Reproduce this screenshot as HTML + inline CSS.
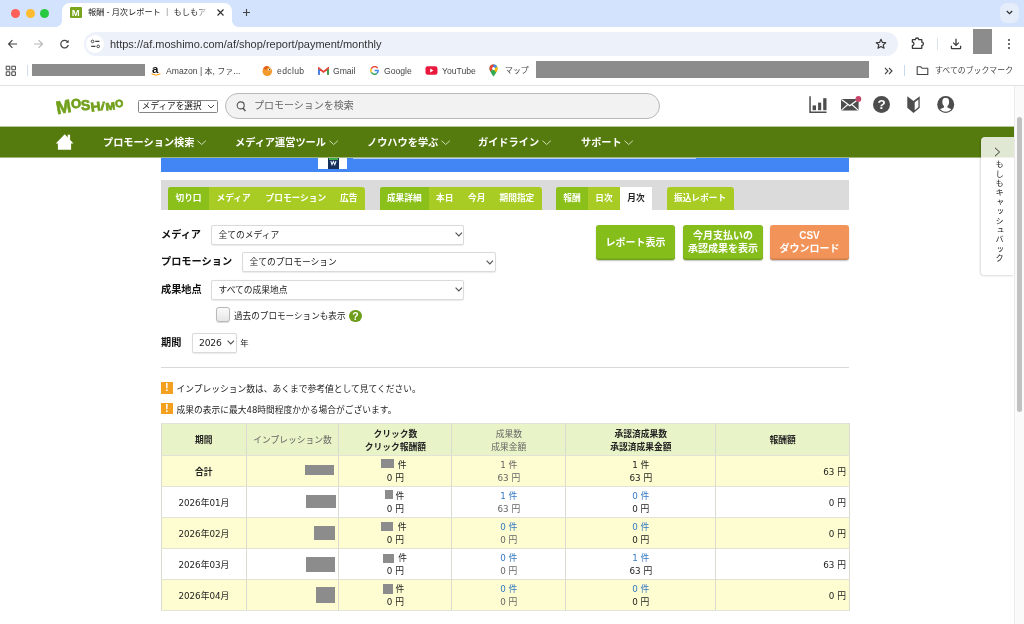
<!DOCTYPE html>
<html lang="ja"><head><meta charset="utf-8"><title>報酬 - 月次レポート</title>
<style>
*{box-sizing:border-box;margin:0;padding:0}
html,body{width:1024px;height:624px;overflow:hidden;background:#fff}
body{position:relative;will-change:transform;font-family:"Liberation Sans","Noto Sans CJK JP",sans-serif;color:#222;font-size:10px}
.a{position:absolute;white-space:nowrap}
.g{background:#8c8c8c}
/* chrome */
#tabbar{left:0;top:0;width:1024px;height:27px;background:#d3e3fd}
#tab{left:62px;top:3px;width:170px;height:24px;background:#fff;border-radius:8px 8px 0 0}
#toolbar{left:0;top:27px;width:1024px;height:31px;background:#fff}
#url{left:84px;top:31.500px;width:814px;height:24px;border-radius:12px;background:#edf1fa}
#bm{left:0;top:58px;width:1024px;height:28px;background:#fff;border-bottom:1px solid #dfe1e5}
.bmt{font-size:8.6px;color:#444;top:65px;line-height:12px}
/* page */
#nav{left:0;top:126px;width:1014px;height:32px;background:linear-gradient(to bottom,rgba(85,123,14,.42) 0,rgba(85,123,14,.42) 1px,#557b0e 1px,#557b0e 31px,rgba(85,123,14,.55) 31px)}
.lg{font-weight:bold;color:#72a01c;line-height:1;transform-origin:50% 50%;-webkit-text-stroke:0.700px #72a01c}
.cv{top:140px;width:10px;height:6px}
.nv{color:#fff;font-weight:bold;font-size:10.200px;top:135.500px;line-height:14px}
.tabs{top:187px;height:23px;line-height:22.500px;color:#fff;font-weight:bold;font-size:8.700px;text-align:center}
.lbl{font-weight:bold;font-size:10.200px;color:#111;line-height:14px}
.sel{border:1px solid #dadada;border-radius:2px;background:#fff;height:20px;font-size:8.750px;line-height:18px;padding-left:6.500px;color:#222;box-shadow:0 0.500px 1px rgba(0,0,0,.08)}
.sc{width:8px;height:5px}
.btn{top:224.500px;height:35.500px;border-radius:3px;color:#fff;font-weight:bold;font-size:10px;text-align:center;line-height:13px;box-shadow:inset 0 -1.500px 0 rgba(0,0,0,.14),0 1px 1.500px rgba(0,0,0,.25)}
.note{font-size:8.750px;color:#222;line-height:12px}
.ex{width:11.500px;height:11.500px;background:#f2a01e;color:#fff;font-size:11px;font-weight:bold;text-align:center;line-height:11.500px}
table{border-collapse:collapse;position:absolute;left:161px;top:423px;width:688px;font-size:8.750px;table-layout:fixed;font-family:"DejaVu Sans","Noto Sans CJK JP",sans-serif}
td,th{border:1px solid #e2e2d6;border-left-color:#dadad0;border-right-color:#dadad0;text-align:center;line-height:13px;padding:0;height:31px;font-weight:normal;color:#222}
th{background:#e8f3c7;padding-top:2px;font-weight:bold;height:32px;font-family:"Liberation Sans","Noto Sans CJK JP",sans-serif}
tr.y td{background:#fdfdd1}
.bl{color:#3579c4}
.r{text-align:right;padding-right:3px}
.gb{display:inline-block;height:1px}
.gy{color:#666}
td{padding-top:2px}
td b{font-family:"Liberation Sans","Noto Sans CJK JP",sans-serif}
</style></head><body>
<!-- browser chrome -->
<div class="a" id="tabbar"></div>
<div class="a" style="left:11px;top:8.500px;width:9px;height:9px;border-radius:50%;background:#fe5f57"></div>
<div class="a" style="left:26px;top:8.500px;width:9px;height:9px;border-radius:50%;background:#febc2e"></div>
<div class="a" style="left:40px;top:8.500px;width:9px;height:9px;border-radius:50%;background:#28c840"></div>
<div class="a" id="tab"></div>
<div class="a" style="left:56px;top:21px;width:6px;height:6px;background:radial-gradient(circle at 0 0,#d3e3fd 5.5px,#fff 6px)"></div>
<div class="a" style="left:232px;top:21px;width:6px;height:6px;background:radial-gradient(circle at 100% 0,#d3e3fd 5.5px,#fff 6px)"></div>
<div class="a" style="left:70px;top:6.700px;width:11.500px;height:11.500px;background:#7aa51d;color:#fff;font-size:9.500px;font-weight:bold;text-align:center;line-height:11.500px;border-radius:1px">M</div>
<div class="a" style="left:88px;top:6px;font-size:8.2px;line-height:13px;color:#222">報酬 - 月次レポート ｜ もしもア</div>
<div class="a" style="left:196px;top:4px;width:12px;height:18px;background:linear-gradient(90deg,rgba(255,255,255,0),#fff)"></div>
<svg class="a" style="left:216px;top:8px" width="9" height="9" viewBox="0 0 9 9"><path d="M1.5 1.5l6 6M7.5 1.5l-6 6" stroke="#333" stroke-width="1.2" fill="none"/></svg>
<svg class="a" style="left:242px;top:8px" width="9" height="9" viewBox="0 0 9 9"><path d="M4.5 1v7M1 4.5h7" stroke="#444" stroke-width="1.1" fill="none"/></svg>
<div class="a" style="left:1000px;top:3px;width:19px;height:20px;border-radius:7px;background:#e5edfb"></div>
<svg class="a" style="left:1005px;top:9px" width="9" height="7" viewBox="0 0 9 7"><path d="M1.8 2l2.7 2.7L7.2 2" stroke="#333" stroke-width="1.3" fill="none"/></svg>
<div class="a" id="toolbar"></div>
<svg class="a" style="left:7px;top:39px" width="11" height="10" viewBox="0 0 11 10"><path d="M10 5H1.7M5.4 1.2L1.6 5l3.8 3.8" stroke="#444" stroke-width="1.2" fill="none"/></svg>
<svg class="a" style="left:33px;top:39px" width="11" height="10" viewBox="0 0 11 10"><path d="M1 5h8.3M5.6 1.2L9.4 5 5.6 8.8" stroke="#b8b8b8" stroke-width="1.2" fill="none"/></svg>
<svg class="a" style="left:59px;top:39px" width="11" height="10" viewBox="0 0 11 10"><path d="M8.9 3.2A3.8 3.8 0 1 0 9.3 6" stroke="#444" stroke-width="1.2" fill="none"/><path d="M9.6 0.8v3h-3z" fill="#444"/></svg>
<div class="a" id="url"></div>
<div class="a" style="left:86px;top:35px;width:18px;height:18px;border-radius:50%;background:#fff"></div>
<svg class="a" style="left:90px;top:39px" width="11" height="10" viewBox="0 0 11 10"><circle cx="2.6" cy="2.4" r="1.3" stroke="#444" stroke-width="1" fill="none"/><path d="M5.2 2.4h4.3M1.2 7.4h4.3" stroke="#444" stroke-width="1.1"/><circle cx="8.2" cy="7.4" r="1.3" stroke="#444" stroke-width="1" fill="none"/></svg>
<div class="a" style="left:110px;top:37px;font-size:11px;line-height:14px;color:#333">https://af.moshimo.com/af/shop/report/payment/monthly</div>
<svg class="a" style="left:875px;top:38px" width="12" height="12" viewBox="0 0 12 12"><path d="M6 1.3l1.4 3.1 3.3.3-2.5 2.2.8 3.3L6 8.5 3 10.2l.8-3.3L1.3 4.7l3.3-.3z" stroke="#3c3c3c" stroke-width="1.200" fill="none" stroke-linejoin="round"/></svg>
<svg class="a" style="left:911.300px;top:37.200px" width="14" height="13" viewBox="0 0 14 13"><path d="M1.400 2.700H4.400A1.700 1.700 0 0 1 7.800 2.700H10.800V5.200A1.600 1.600 0 0 1 10.800 8.400V11.300H1.400V8.400A1.600 1.600 0 0 0 1.400 5.200Z" stroke="#3c3c3c" stroke-width="1.300" fill="none" stroke-linejoin="round"/></svg>
<div class="a" style="left:937px;top:38px;width:1px;height:12px;background:#d9e0ee"></div>
<svg class="a" style="left:950px;top:38px" width="12" height="12" viewBox="0 0 12 12"><path d="M6 0.800v6.400M3.200 4.600L6 7.400l2.800-2.800M1.400 7.800v2.200q0 .600.600.600h8q.600 0 .600-.600V7.800" stroke="#3c3c3c" stroke-width="1.300" fill="none"/></svg>
<div class="a g" style="left:973px;top:29px;width:19px;height:25px"></div>
<div class="a" style="left:1007.900px;top:38.700px;width:2.200px;height:2.200px;border-radius:50%;background:#3c3c3c;box-shadow:0 4px 0 #3c3c3c,0 8.100px 0 #3c3c3c"></div>
<div class="a" id="bm"></div>
<svg class="a" style="left:5px;top:65px" width="12" height="12" viewBox="0 0 12 12"><path d="M1.2 1.2h3.6v3.6H1.2zM6.8 1.2h3.6v3.6H6.8zM1.2 6.8h3.6v3.6H1.2zM6.8 6.8h3.6v3.6H6.8z" stroke="#444" stroke-width="1" fill="none"/></svg>
<div class="a" style="left:27px;top:65px;width:1px;height:11px;background:#d0dcf0"></div>
<div class="a g" style="left:32px;top:64px;width:113px;height:12px"></div>
<div class="a" style="left:152px;top:63px;font-size:11.500px;font-weight:bold;line-height:13px;color:#111">a</div>
<svg class="a" style="left:151px;top:73px" width="10" height="4" viewBox="0 0 10 4"><path d="M0.5 0.8Q5 3.6 9.5 0.8" stroke="#f90" stroke-width="1" fill="none"/></svg>
<div class="a bmt" style="left:166px">Amazon | <span style="font-size:8px">本</span>, <span style="font-size:8px">ファ</span>...</div>
<svg class="a" style="left:261px;top:64px" width="13" height="13" viewBox="0 0 13 13"><circle cx="6.3" cy="7.3" r="4.8" fill="#f39a2c"/><path d="M2 4.5Q5 0.5 8.5 3.2Q6 3.5 5 6z" fill="#e2601d"/><circle cx="8.3" cy="5.6" r="1.2" fill="#fff"/><circle cx="8.5" cy="5.7" r="0.6" fill="#222"/></svg>
<div class="a bmt" style="left:277px;letter-spacing:0.350px">edclub</div>
<svg class="a" style="left:317.500px;top:66.500px" width="11" height="8" viewBox="0 0 11 8"><path d="M1 7.800V1.400L5.500 4.900 10 1.400V7.800" stroke="#ea4335" stroke-width="1.900" fill="none"/><path d="M1 7.800V2.600" stroke="#4285f4" stroke-width="1.900"/><path d="M10 7.800V2.600" stroke="#34a853" stroke-width="1.900"/></svg>
<div class="a bmt" style="left:333px">Gmail</div>
<svg class="a" style="left:370px;top:66px" width="9" height="9" viewBox="0 0 11 11"><path d="M9.3 2.6A4.4 4.4 0 0 0 1.6 3.4" stroke="#ea4335" stroke-width="1.8" fill="none"/><path d="M1.6 3.4A4.4 4.4 0 0 0 1.6 7.6" stroke="#fbbc05" stroke-width="1.8" fill="none"/><path d="M1.6 7.6A4.4 4.4 0 0 0 8.6 8.8" stroke="#34a853" stroke-width="1.8" fill="none"/><path d="M8.6 8.8A4.4 4.4 0 0 0 9.9 5.5H5.6" stroke="#4285f4" stroke-width="1.8" fill="none"/></svg>
<div class="a bmt" style="left:384px">Google</div>
<svg class="a" style="left:425px;top:66px" width="13" height="9" viewBox="0 0 13 9"><rect x="0.5" y="0.3" width="12" height="8.4" rx="2.2" fill="#e8193c"/><path d="M5.2 2.6l3.2 1.9-3.2 1.9z" fill="#fff"/></svg>
<div class="a bmt" style="left:442px">YouTube</div>
<svg class="a" style="left:489px;top:64px" width="9" height="13" viewBox="0 0 9 13"><path d="M4.5 0.5a4 4 0 0 1 4 4c0 3-4 8-4 8s-4-5-4-8a4 4 0 0 1 4-4z" fill="#34a853"/><path d="M4.5 0.5a4 4 0 0 0-4 4c0 1 .4 2 1 3.200L6 1z" fill="#ea4335"/><path d="M4.500 0.500a4 4 0 0 1 3.500 2L4.500 6z" fill="#4285f4"/><path d="M8 2.500c.3.600.5 1.300.5 2 0 1.200-.6 2.600-1.400 4L4.500 5.500z" fill="#fbbc05"/><circle cx="4.500" cy="4.500" r="1.500" fill="#fff"/></svg>
<div class="a bmt" style="left:505px;font-size:7.900px">マップ</div>
<div class="a g" style="left:536px;top:61px;width:333px;height:17px"></div>
<svg class="a" style="left:884px;top:67px" width="9" height="8" viewBox="0 0 9 8"><path d="M1 1l3 3-3 3M5 1l3 3-3 3" stroke="#444" stroke-width="1.1" fill="none"/></svg>
<div class="a" style="left:904px;top:65px;width:1px;height:11px;background:#c9d8ee"></div>
<svg class="a" style="left:916px;top:65px" width="13" height="11" viewBox="0 0 13 11"><path d="M1.200 1.800h3.600l1.200 1.400h5.800v6.300H1.200z" stroke="#444" stroke-width="1.100" fill="none" stroke-linejoin="round"/></svg>
<div class="a bmt" style="left:935px;font-size:7.9px">すべてのブックマーク</div>
<!-- page header -->
<div class="a lg" style="left:55.500px;top:98px;font-size:18px;transform:rotate(-10deg)">M</div>
<div class="a lg" style="left:71.300px;top:96.800px;font-size:13px;transform:rotate(-6deg)">O</div>
<div class="a lg" style="left:80.800px;top:97.800px;font-size:14px;transform:rotate(-4deg)">S</div>
<div class="a lg" style="left:91px;top:101.300px;font-size:12.800px;transform:rotate(-8deg) scaleX(1.080)">H</div>
<div class="a lg" style="left:100.800px;top:100.600px;font-size:11px;transform:skewX(-16deg);-webkit-text-stroke:0.900px #72a01c">i</div>
<div class="a lg" style="left:106.300px;top:100.600px;font-size:10.500px;transform:rotate(-7deg) scaleX(1.100)">M</div>
<div class="a lg" style="left:115.200px;top:97.800px;font-size:10.500px;transform:rotate(-6deg)">O</div>
<div class="a" style="left:138px;top:100px;width:80px;height:13px;border:1px solid #858585;border-radius:1.500px;font-size:8.650px;line-height:11px;padding-left:2.800px;color:#111">メディアを選択</div>
<svg class="a" style="left:207px;top:104px" width="8" height="5" viewBox="0 0 8 5"><path d="M1 1l3 3 3-3" stroke="#333" stroke-width="0.9" fill="none"/></svg>
<div class="a" style="left:225px;top:93px;width:435px;height:26px;border-radius:13px;border:1px solid #b9b9b9;background:#f2f2f2"></div>
<svg class="a" style="left:236px;top:101px" width="11" height="11" viewBox="0 0 11 11"><circle cx="4.700" cy="4.400" r="3.500" stroke="#505050" stroke-width="1.100" fill="none"/><path d="M7 7l2.400 3.200" stroke="#505050" stroke-width="1.400"/></svg>
<div class="a" style="left:254px;top:99px;font-size:10px;line-height:14px;color:#666">プロモーションを検索</div>
<svg class="a" style="left:809px;top:96px" width="19" height="18" viewBox="0 0 19 18"><path d="M1.050 0.200v16.100h16.500" stroke="#4d4d4d" stroke-width="1.500" fill="none"/><rect x="3.600" y="9.400" width="3.400" height="4.800" fill="#4d4d4d"/><rect x="9.100" y="6.600" width="3.100" height="7.600" fill="#4d4d4d"/><rect x="14.200" y="2.200" width="3.300" height="12" fill="#4d4d4d"/></svg>
<svg class="a" style="left:841px;top:95px" width="21" height="17" viewBox="0 0 21 17"><rect x="0" y="3.900" width="17.600" height="11.600" rx="1.200" fill="#4d4d4d"/><path d="M0.500 4.600l8.300 6.200 8.300-6.200" stroke="#fff" stroke-width="1.200" fill="none"/><path d="M0.500 15.100l6.300-5.600M17.100 15.100l-6.300-5.600" stroke="#fff" stroke-width="1.100" fill="none"/><circle cx="17.400" cy="3.900" r="2.900" fill="#c6466a"/></svg>
<div class="a" style="left:873.200px;top:96.200px;width:17px;height:17px;border-radius:50%;background:#4d4d4d;color:#fff;font-size:13.500px;font-weight:bold;text-align:center;line-height:17.500px">?</div>
<svg class="a" style="left:907px;top:96px" width="13" height="17" viewBox="0 0 13 17"><path d="M0.300 0.300L6.500 5 12.700 0.300V11.800L6.500 16.900 0.300 11.800z" fill="#4d4d4d"/><path d="M7.700 6.300l3.700-2.900v7.700l-3.700 3.100z" fill="#fff"/></svg>
<svg class="a" style="left:937px;top:96px" width="18" height="18" viewBox="0 0 18 18"><defs><clipPath id="uc"><circle cx="8.700" cy="8.600" r="7.200"/></clipPath></defs><circle cx="8.700" cy="8.600" r="8.500" fill="#4d4d4d"/><g clip-path="url(#uc)" fill="#fff"><ellipse cx="8.700" cy="6" rx="3.400" ry="4.200"/><path d="M7 9h3.400v2.200c0 .8 4.200 1.200 5 3.300v3.500H2v-3.500c.8-2.100 5-2.500 5-3.300z"/></g></svg>
<div class="a" id="nav"></div>
<svg class="a" style="left:56px;top:134px" width="18" height="17" viewBox="0 0 18 17"><path d="M8.700 0.300L17.500 9.400H15.100V15.800H1.900V9.400H-0.100z" fill="#fff"/><rect x="11.700" y="0.700" width="2.400" height="5" fill="#fff"/></svg>
<div class="a nv" style="left:103px">プロモーション検索</div>
<svg class="a cv" style="left:197px"><use href="#cv"/></svg>
<div class="a nv" style="left:235px">メディア運営ツール</div>
<svg class="a cv" style="left:329px"><use href="#cv"/></svg>
<div class="a nv" style="left:367px">ノウハウを学ぶ</div>
<svg class="a cv" style="left:441px"><use href="#cv"/></svg>
<div class="a nv" style="left:478px">ガイドライン</div>
<svg class="a cv" style="left:542px"><use href="#cv"/></svg>
<div class="a nv" style="left:581px">サポート</div>
<svg class="a cv" style="left:624px"><use href="#cv"/></svg>
<svg width="0" height="0" style="position:absolute"><defs><path id="cv" d="M0.500 0.700l4.200 3.800 4.200-3.800" stroke="#dfe8c8" stroke-width="0.900" fill="none"/></defs></svg>
<!-- blue banner -->
<div class="a" style="left:161px;top:158px;width:688px;height:14px;background:#4285f4"></div>
<div class="a" style="left:353px;top:158px;width:343px;height:1px;background:rgba(255,255,255,.6)"></div>
<div class="a" style="left:318px;top:158.300px;width:29.400px;height:10.300px;background:#fff"></div>
<div class="a" style="left:327.800px;top:158px;width:10.800px;height:10.600px;background:#17305a"></div>
<div class="a" style="left:328.500px;top:158px;width:9.400px;height:2px;background:#3fae49"></div>
<svg class="a" style="left:329px;top:160px" width="9" height="6" viewBox="0 0 9 6"><path d="M1.800 1l1.200 3.600 1.400-3 1.400 3 1.200-3.600" stroke="#e8f2ff" stroke-width="1.100" fill="none"/></svg>
<!-- tab strip -->
<div class="a" style="left:161px;top:180px;width:688px;height:30px;background:#dbdbdb"></div>
<div class="a tabs" style="left:168px;width:197px;background:#a9cc24;border-radius:3px 3px 0 0"></div>
<div class="a tabs" style="left:168px;width:41px;background:#8bc01a;border-radius:3px 0 0 0">切り口</div>
<div class="a tabs" style="left:216.500px">メディア</div>
<div class="a tabs" style="left:265.500px">プロモーション</div>
<div class="a tabs" style="left:340px">広告</div>
<div class="a tabs" style="left:379.500px;width:162.500px;background:#a9cc24;border-radius:3px 3px 0 0"></div>
<div class="a tabs" style="left:379.500px;width:49.500px;background:#8bc01a;border-radius:3px 0 0 0">成果詳細</div>
<div class="a tabs" style="left:436px">本日</div>
<div class="a tabs" style="left:468px">今月</div>
<div class="a tabs" style="left:499.500px">期間指定</div>
<div class="a tabs" style="left:556px;width:96px;background:#a9cc24;border-radius:3px 3px 0 0"></div>
<div class="a tabs" style="left:556px;width:32px;background:#8bc01a;border-radius:3px 0 0 0">報酬</div>
<div class="a tabs" style="left:588px;width:32px">日次</div>
<div class="a tabs" style="left:620px;width:32px;background:#fff;color:#222">月次</div>
<div class="a tabs" style="left:666.500px;width:67px;background:#a9cc24;border-radius:3px 3px 0 0">振込レポート</div>
<!-- form -->
<div class="a lbl" style="left:161px;top:228px">メディア</div>
<div class="a sel" style="left:211px;top:225px;width:253px">全てのメディア</div>
<svg class="a sc" style="left:455px;top:232.300px"><use href="#sc"/></svg>
<div class="a lbl" style="left:161px;top:255.200px">プロモーション</div>
<div class="a sel" style="left:242px;top:252px;width:254px">全てのプロモーション</div>
<svg class="a sc" style="left:486px;top:259.800px"><use href="#sc"/></svg>
<div class="a lbl" style="left:161px;top:283.300px">成果地点</div>
<div class="a sel" style="left:211px;top:280px;width:253px">すべての成果地点</div>
<svg class="a sc" style="left:455px;top:287.200px"><use href="#sc"/></svg>
<svg width="0" height="0" style="position:absolute"><defs><path id="sc" d="M0.600 0.700l3.200 3.300 3.200-3.300" stroke="#505050" stroke-width="1.100" fill="none"/></defs></svg>
<div class="a" style="left:215.500px;top:307.300px;width:14.500px;height:14.500px;border:1px solid #b8b8b8;border-radius:3px;background:linear-gradient(#fafafa,#e6e6e6);box-shadow:0 0.500px 1px rgba(0,0,0,.15)"></div>
<div class="a note" style="left:234px;top:309.600px;font-size:8.600px">過去のプロモーションも表示</div>
<div class="a" style="left:349.200px;top:309.800px;width:12.500px;height:12.500px;border-radius:50%;background:#6d9d1a;color:#fff;font-size:10.500px;font-weight:bold;text-align:center;line-height:12.500px">?</div>
<div class="a lbl" style="left:161px;top:335.500px">期間</div>
<div class="a sel" style="left:191.500px;top:332.500px;width:45px;font-size:9.200px;letter-spacing:-0.200px;font-family:'DejaVu Sans','Liberation Sans',sans-serif;padding-left:6.500px">2026</div>
<svg class="a sc" style="left:226.700px;top:340px"><use href="#sc"/></svg>
<div class="a note" style="left:240.300px;top:336.800px;font-size:8.300px">年</div>
<div class="a btn" style="left:596px;width:79px;background:#85bd1b;line-height:35px">レポート表示</div>
<div class="a btn" style="left:683px;width:80px;background:#85bd1b;padding-top:4px">今月支払いの<br>承認成果を表示</div>
<div class="a btn" style="left:770px;width:79px;background:#f2945a;padding-top:4px">CSV<br>ダウンロード</div>
<div class="a" style="left:161px;top:367px;width:688px;height:1px;background:#d8d8d8"></div>
<div class="a ex" style="left:161px;top:382.200px">!</div>
<div class="a note" style="left:176.500px;top:383px">インプレッション数は、あくまで参考値として見てください。</div>
<div class="a ex" style="left:161px;top:402.900px">!</div>
<div class="a note" style="left:176.500px;top:403.500px">成果の表示に最大<span style="font-family:'DejaVu Sans',sans-serif;font-size:8.500px">48</span>時間程度かかる場合がございます。</div>
<table>
<colgroup><col style="width:84.700px"><col style="width:92.700px"><col style="width:113.100px"><col style="width:113.700px"><col style="width:150.300px"><col style="width:133.500px"></colgroup>
<tr><th>期間</th><th class="gy" style="font-weight:normal">インプレッション数</th><th>クリック数<br>クリック報酬額</th><th class="gy" style="font-weight:normal">成果数<br>成果金額</th><th>承認済成果数<br>承認済成果金額</th><th>報酬額</th></tr>
<tr class="y"><td><b>合計</b></td><td></td><td class="ck"><span style="margin-left:13.35px">件</span><br>0 円</td><td><span class="gy">1 件<br>63 円</span></td><td>1 件<br>63 円</td><td class="r">63 円</td></tr>
<tr><td>2026年01月</td><td></td><td class="ck"><span style="margin-left:8.75px">件</span><br>0 円</td><td><span class="bl">1 件</span><br><span class="gy">63 円</span></td><td><span class="bl">0 件</span><br>0 円</td><td class="r">0 円</td></tr>
<tr class="y"><td>2026年02月</td><td></td><td class="ck"><span style="margin-left:13.35px">件</span><br>0 円</td><td><span class="bl">0 件</span><br><span class="gy">0 円</span></td><td><span class="bl">0 件</span><br>0 円</td><td class="r">0 円</td></tr>
<tr><td>2026年03月</td><td></td><td class="ck"><span style="margin-left:14.55px">件</span><br>0 円</td><td><span class="bl">0 件</span><br><span class="gy">0 円</span></td><td><span class="bl">1 件</span><br>63 円</td><td class="r">63 円</td></tr>
<tr class="y"><td>2026年04月</td><td></td><td class="ck"><span style="margin-left:8.75px">件</span><br>0 円</td><td><span class="bl">0 件</span><br><span class="gy">0 円</span></td><td><span class="bl">0 件</span><br>0 円</td><td class="r">0 円</td></tr>
</table>
<div class="a g" style="left:305px;top:464.7px;width:29.3px;height:10.5px"></div>
<div class="a g" style="left:306px;top:495px;width:30.4px;height:12.7px"></div>
<div class="a g" style="left:313.8px;top:526.2px;width:21.4px;height:13.8px"></div>
<div class="a g" style="left:305.9px;top:557px;width:29px;height:15px"></div>
<div class="a g" style="left:315.9px;top:586.5px;width:19.3px;height:16.2px"></div>
<div class="a g" style="left:381.2px;top:459.4px;width:13.2px;height:8.8px"></div>
<div class="a g" style="left:384.7px;top:490.2px;width:8.3px;height:9.3px"></div>
<div class="a g" style="left:381.2px;top:521.8px;width:12.3px;height:9.4px"></div>
<div class="a g" style="left:382.7px;top:554px;width:11.7px;height:9.1px"></div>
<div class="a g" style="left:383.3px;top:584.2px;width:9.7px;height:9.4px"></div>

<!-- right side -->
<div class="a" style="left:1014px;top:86px;width:10px;height:538px;background:#fafafa;border-left:1px solid #ececec"></div>
<div class="a" style="left:1016.700px;top:116.700px;width:5.800px;height:295px;border-radius:3px;background:#c1c1c1"></div>
<div class="a" style="left:981px;top:136.500px;width:33px;height:138px;background:rgba(255,255,255,.82);border-radius:4px 0 0 4px;box-shadow:-1px 1px 2px rgba(0,0,0,.15)"></div>
<div class="a" style="left:981px;top:158px;width:33px;height:116.500px;background:#fff;border-radius:0 0 0 4px"></div>
<svg class="a" style="left:994px;top:147px" width="7" height="10" viewBox="0 0 7 10"><path d="M1 0.800l4.600 4.200L1 9.200" stroke="#222" stroke-width="0.900" fill="none"/></svg>
<div class="a" style="left:992.500px;top:160.300px;width:10px;font-size:8.200px;line-height:10px;writing-mode:vertical-rl;color:#222;letter-spacing:1.200px">もしもキャッシュバック</div>
</body></html>
